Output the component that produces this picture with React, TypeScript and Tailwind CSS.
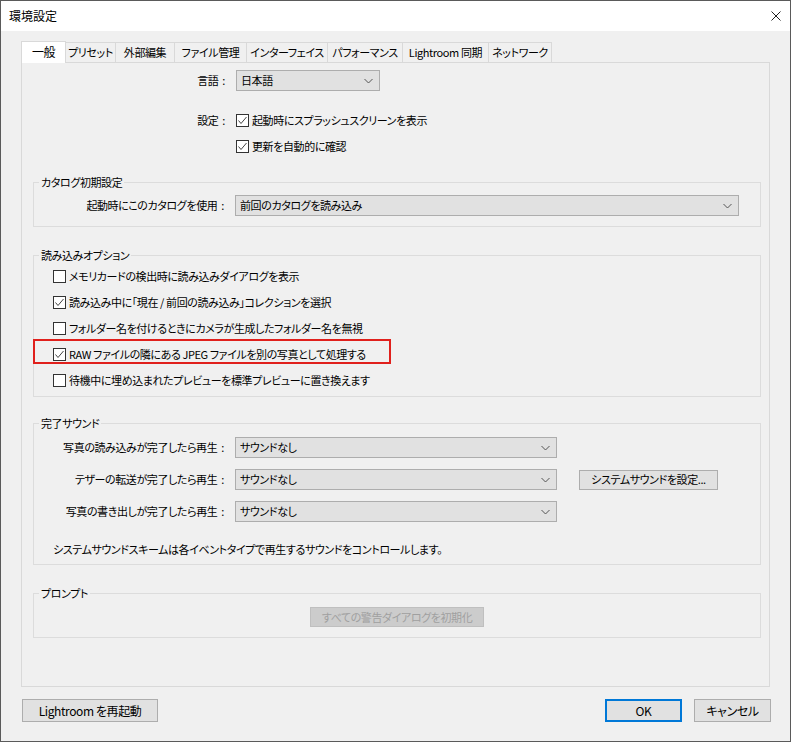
import React from 'react';

const tabs = [
  { label: '一般', w: 'w-[45px]' },
  { label: 'プリセット', w: 'w-[50px]' },
  { label: '外部編集', w: 'w-[59px]' },
  { label: 'ファイル管理', w: 'w-[72px]' },
  { label: 'インターフェイス', w: 'w-[81px]' },
  { label: 'パフォーマンス', w: 'w-[75px]' },
  { label: 'Lightroom 同期', w: 'w-[86px]' },
  { label: 'ネットワーク', w: 'w-[63px]' },
];

const importOptions = [
  { label: 'メモリカードの検出時に読み込みダイアログを表示', checked: false },
  { label: '読み込み中に「現在 / 前回の読み込み」コレクションを選択', checked: true },
  { label: 'フォルダー名を付けるときにカメラが生成したフォルダー名を無視', checked: false },
  { label: 'RAW ファイルの隣にある JPEG ファイルを別の写真として処理する', checked: true, marked: true },
  { label: '待機中に埋め込まれたプレビューを標準プレビューに置き換えます', checked: false },
];

const sounds = ['写真の読み込みが完了したら再生', 'テザーの転送が完了したら再生', '写真の書き出しが完了したら再生'];

const Chevron = () => (
  <svg width="9" height="6" viewBox="0 0 9 6" className="shrink-0">
    <polyline points="0.5,1 4.5,5 8.5,1" fill="none" stroke="#555" strokeWidth="1" />
  </svg>
);

const Select: React.FC<{ value: string; className: string }> = ({ value, className }) => (
  <div
    className={`h-[21px] flex items-center justify-between pl-[4px] pr-[6px] bg-[#e1e1e1] border border-[#adadad] ${className}`}
  >
    <span>{value}</span>
    <Chevron />
  </div>
);

// right-aligned field label with the spaced colon
const Label: React.FC<{ text: string; className: string }> = ({ text, className }) => (
  <div className={`text-right pr-[5px] ${className}`}>
    {text}
    <span className="ml-[4px]">:</span>
  </div>
);

const CheckBox: React.FC<{ checked: boolean }> = ({ checked }) => (
  <span className="w-[13px] h-[13px] border border-[#333] bg-white flex items-center justify-center shrink-0">
    {checked && (
      <svg width="11" height="11" viewBox="0 0 11 11">
        <polyline points="1.5,5.5 4,8.5 9.5,2" fill="none" stroke="#444" strokeWidth="1" />
      </svg>
    )}
  </span>
);

const Check: React.FC<{ checked: boolean; label: string }> = ({ checked, label }) => (
  <div className="flex items-center gap-[3px]">
    <CheckBox checked={checked} />
    <span>{label}</span>
  </div>
);

const Group: React.FC<{ title: string; className: string; children: React.ReactNode }> = ({
  title,
  className,
  children,
}) => (
  <fieldset className={`border border-[#dcdcdc] w-[728px] ${className}`}>
    <legend className="ml-[5px] px-[2px] leading-[16px]">{title}</legend>
    {children}
  </fieldset>
);

const Button: React.FC<{ className: string; children: React.ReactNode }> = ({ className, children }) => (
  <div className={`flex items-center justify-center border ${className}`}>{children}</div>
);

export default function App() {
  return (
    <div className="w-[791px] h-[742px] border border-[#5a5a5a] flex flex-col bg-[#f0f0f0] text-[11px] tracking-[-0.4px] whitespace-nowrap text-black font-['Noto_Sans_CJK_JP',sans-serif] [font-feature-settings:'palt']">
      {/* title bar */}
      <div className="h-[30px] bg-white flex items-center justify-between pl-[8px] pr-[9px] shrink-0">
        <span className="text-[12px] tracking-normal">環境設定</span>
        <svg width="10" height="10" viewBox="0 0 10 10">
          <path d="M0.5 0.5 L9.5 9.5 M9.5 0.5 L0.5 9.5" stroke="#222" strokeWidth="1" fill="none" />
        </svg>
      </div>

      <div className="flex-1 flex flex-col px-[20px] pt-[10px]">
        {/* tabs */}
        <div className="flex items-end h-[21px] relative z-10">
          {tabs.map((t, i) => (
            <div
              key={t.label}
              className={
                i === 0
                  ? `${t.w} h-[22px] -mb-[1px] bg-white border border-b-0 border-[#d9d9d9] flex items-center justify-center pb-[1px] text-[12px]`
                  : `${t.w} h-[20px] bg-[#f0f0f0] border-t border-r border-[#d9d9d9] flex items-center justify-center`
              }
            >
              {t.label}
            </div>
          ))}
        </div>

        {/* panel */}
        <div className="w-[749px] h-[625px] border border-[#d9d9d9] bg-[#f0f0f0] flex flex-col pl-[11px]">
          <div className="flex items-center mt-[7px] -ml-[11px]">
            <Label text="言語" className="w-[208px]" />
            <Select value="日本語" className="ml-[6px] w-[144px]" />
          </div>

          <div className="flex items-center h-[20px] mt-[19px] -ml-[11px]">
            <Label text="設定" className="w-[208px]" />
            <div className="ml-[6px]">
              <Check checked label="起動時にスプラッシュスクリーンを表示" />
            </div>
          </div>
          <div className="flex items-center h-[20px] mt-[6px] ml-[203px]">
            <Check checked label="更新を自動的に確認" />
          </div>

          <Group title="カタログ初期設定" className="mt-[18px] pt-[5px] pb-[10px]">
            <div className="flex items-center">
              <Label text="起動時にこのカタログを使用" className="w-[195px]" />
              <Select value="前回のカタログを読み込み" className="ml-[6px] w-[504px]" />
            </div>
          </Group>

          <Group title="読み込みオプション" className="mt-[20px] pb-[3px]">
            {importOptions.map((o) => (
              <div key={o.label} className="relative h-[26px] flex items-center pl-[19px]">
                {o.marked && (
                  <div className="absolute left-[-1px] top-[-2px] w-[358px] h-[25px] border-2 border-[#e0201c]" />
                )}
                <Check checked={o.checked} label={o.label} />
              </div>
            ))}
          </Group>

          <Group title="完了サウンド" className="mt-[18px] pt-[6px] pb-[7px]">
            <div className="flex flex-col gap-[11px]">
              {sounds.map((s, i) => (
                <div key={s} className="flex items-center">
                  <Label text={s} className="w-[195px]" />
                  <Select value="サウンドなし" className="ml-[6px] w-[322px]" />
                  {i === 1 && (
                    <Button className="ml-[22px] w-[139px] h-[20px] bg-[#e1e1e1] border-[#adadad]">
                      システムサウンドを設定...
                    </Button>
                  )}
                </div>
              ))}
            </div>
            <div className="mt-[19px] h-[16px] leading-[16px] pl-[19px]">
              システムサウンドスキームは各イベントタイプで再生するサウンドをコントロールします。
            </div>
          </Group>

          <Group title="プロンプト" className="mt-[20px] pt-[6px] pb-[10px]">
            <div className="flex justify-center">
              <Button className="w-[174px] h-[20px] bg-[#cccccc] border-[#bfbfbf] text-[#a0a0a0]">
                すべての警告ダイアログを初期化
              </Button>
            </div>
          </Group>
        </div>

        {/* footer buttons */}
        <div className="flex items-center mt-[12px] pl-[1px] text-[12px]">
          <Button className="w-[136px] h-[23px] bg-[#e1e1e1] border-[#adadad]">Lightroom を再起動</Button>
          <div className="flex-1" />
          <Button className="w-[77px] h-[23px] bg-[#e1e1e1] border-2 border-[#0078d7]">OK</Button>
          <Button className="ml-[12px] w-[77px] h-[23px] bg-[#e1e1e1] border-[#adadad] -mr-[1px]">
            キャンセル
          </Button>
        </div>
      </div>
    </div>
  );
}
